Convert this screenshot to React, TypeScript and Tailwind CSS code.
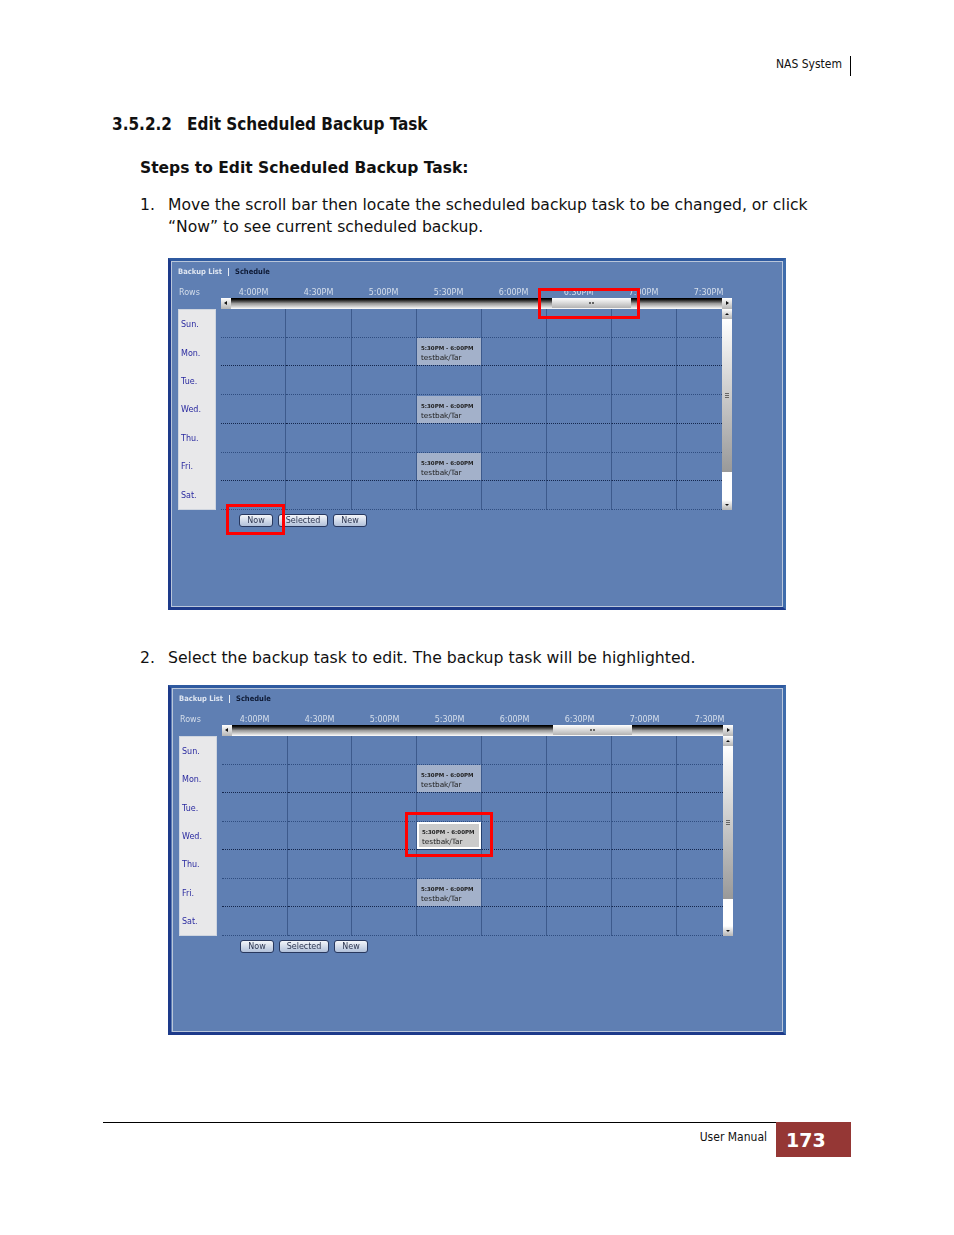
const times = ["4:00PM", "4:30PM", "5:00PM", "5:30PM", "6:00PM", "6:30PM", "7:00PM", "7:30PM"];
const days = ["Sun.", "Mon.", "Tue.", "Wed.", "Thu.", "Fri.", "Sat."];

const Arrow = ({ points }: { points: string }) => (
  <svg width="10" height="10" viewBox="0 0 10 10" className="block">
    <polygon points={points} fill="#111" />
  </svg>
);

const TaskBlock = ({ selected }: { selected: boolean }) => (
  <div
    className={
      selected
        ? "h-[27px] w-full border-2 border-white bg-[#cbcbcb] pl-[3px] text-[#222] leading-[10px] pt-[3px] shadow-[1px_1px_0_#24406f]"
        : "h-[27px] w-full bg-[#a3b1ca] pl-[4px] text-[#222] leading-[10px] pt-[5px]"
    }
  >
    <div className="text-[5.5px] font-bold whitespace-nowrap">5:30PM - 6:00PM</div>
    <div className="text-[7.3px] whitespace-nowrap">testbak/Tar</div>
  </div>
);

const ScheduleGrid = ({
  columns,
  selectedRow,
  rowsClass,
}: {
  columns: string;
  selectedRow: number;
  rowsClass: string;
}) => (
  <div className={`grid ${columns} ${rowsClass} w-[501px]`}>
    {days.map((day, row) =>
      times.map((time, col) => {
        let cls = "flex items-end min-h-0 border-b border-dotted ";
        cls += row % 2 === 0 ? "border-b-[#2f4d80] " : "border-b-[#14264d] ";
        if (col < 7) cls += "border-r [border-right-style:solid] border-r-[#3d5a8c]";
        const hasTask = col === 3 && row % 2 === 1;
        return (
          <div key={day + time} className={cls}>
            {hasTask && <TaskBlock selected={row === selectedRow} />}
          </div>
        );
      })
    )}
  </div>
);

const ScheduleShot = ({
  outerClass,
  innerClass,
  columns,
  rowsClass,
  dayClass,
  selectedRow,
  children,
}: {
  outerClass: string;
  innerClass: string;
  columns: string;
  rowsClass: string;
  dayClass: string;
  selectedRow: number;
  children: React.ReactNode;
}) => (
  <div className={`relative ml-[168px] w-[618px] border-[3px] border-[#1d3a8a] border-t-[#2f5aa0] border-r-[#3f6cab] bg-[#5f7fb3] font-['DejaVu_Sans',sans-serif] ${outerClass}`}>
    <div className={`h-full border border-[#b9c6da] blur-[0.3px] ${innerClass}`}>
      <div className="flex h-[20px] items-center pl-[6px] font-['DejaVu_Sans_Condensed','DejaVu_Sans',sans-serif] text-[7.5px] font-bold">
        <span className="text-[#dfe6f1]">Backup List</span>
        <span className="mx-[6px] h-[8px] w-px bg-[#e5ebf4]" />
        <span className="text-[#0e1a35]">Schedule</span>
      </div>
      <div className="mt-[3px] flex gap-[5px] pl-[6px]">
        <div className="w-[38px]">
          <div className="h-[24px] pl-[1px] text-[8px] leading-[15px] text-[#d5deeb]">Rows</div>
          <div className={`grid border border-[#cfd5df] bg-[#e8e8ea] pl-[2px] text-[8px] text-[#2a2aa0] ${dayClass}`}>
            {days.map((day) => (
              <div key={day} className="flex items-center pt-[2px]">
                {day}
              </div>
            ))}
          </div>
        </div>
        <div className="w-[511px]">
          <div className="flex h-[13px] text-[8px] leading-[15px] text-[#d5deeb]">
            {times.map((time) => (
              <div key={time} className="w-[65px] shrink-0 text-center">
                {time}
              </div>
            ))}
          </div>
          <div className="flex h-[11px] bg-linear-to-b from-black via-[#9a9a9a] to-white">
            <div className="w-[10px] bg-linear-to-b from-white to-[#b5b5b5]">
              <Arrow points="6,3 3,5 6,7" />
            </div>
            <div className="ml-[321px] flex h-[10px] w-[79px] items-center justify-center gap-[1px] bg-linear-to-b from-white to-[#b3b3b3]">
              <span className="h-[2px] w-[2px] bg-[#666]" />
              <span className="h-[2px] w-[2px] bg-[#666]" />
            </div>
            <div className="ml-auto w-[10px] bg-linear-to-b from-white to-[#b5b5b5]">
              <Arrow points="4,3 7,5 4,7" />
            </div>
          </div>
          <div className="flex">
            <ScheduleGrid columns={columns} selectedRow={selectedRow} rowsClass={rowsClass} />
            <div className="flex w-[10px] flex-col">
              <div className="h-[10px] bg-linear-to-b from-white to-[#b5b5b5]">
                <Arrow points="5,4 3,6 7,6" />
              </div>
              <div className="flex h-[153px] flex-col items-center justify-center gap-[1px] bg-linear-to-b from-white to-[#999]">
                <span className="h-px w-[4px] bg-[#666]" />
                <span className="h-px w-[4px] bg-[#666]" />
                <span className="h-px w-[4px] bg-[#666]" />
              </div>
              <div className="flex-1 bg-white" />
              <div className="h-[10px] bg-linear-to-b from-white to-[#b5b5b5]">
                <Arrow points="3,4 7,4 5,6" />
              </div>
            </div>
          </div>
        </div>
      </div>
      <div className="mt-[4px] ml-[67px] flex gap-[5px] text-[8px] text-[#2c3550]">
        <button className="h-[13px] w-[34px] rounded-[3px] border border-[#28385e] bg-linear-to-b from-[#f4f6fa] to-[#b2c1da] leading-[11px]">Now</button>
        <button className="h-[13px] w-[50px] rounded-[3px] border border-[#28385e] bg-linear-to-b from-[#f4f6fa] to-[#b2c1da] leading-[11px]">Selected</button>
        <button className="h-[13px] w-[34px] rounded-[3px] border border-[#28385e] bg-linear-to-b from-[#f4f6fa] to-[#b2c1da] leading-[11px]">New</button>
      </div>
    </div>
    {children}
  </div>
);

const App = () => {
  return (
    <div className="h-[1235px] w-[954px] overflow-hidden bg-white font-['DejaVu_Sans',sans-serif] text-[#111]">
      <div className="flex justify-end pt-[56px] pr-[103px]">
        <div className="h-[20px] border-r border-black pr-[8px] font-['DejaVu_Sans_Condensed','DejaVu_Sans',sans-serif] text-[12px] leading-[16px]">
          NAS System
        </div>
      </div>
      <h2 className="mt-[38px] ml-[112px] font-['DejaVu_Sans_Condensed','DejaVu_Sans',sans-serif] text-[17px] leading-[20px] font-bold">
        3.5.2.2<span className="ml-[15px]">Edit Scheduled Backup Task</span>
      </h2>
      <h3 className="mt-[24px] ml-[140px] text-[15.5px] leading-[20px] font-bold">Steps to Edit Scheduled Backup Task:</h3>
      <div className="mt-[16px] ml-[140px] flex text-[15.6px] leading-[22px]">
        <span className="w-[28px]">1.</span>
        <p className="w-[650px]">
          Move the scroll bar then locate the scheduled backup task to be changed, or click “Now” to see current scheduled backup.
        </p>
      </div>
      <div className="mt-[20px]">
        <ScheduleShot
          outerClass="h-[352px]"
          innerClass=""
          columns="grid-cols-[65px_66px_65px_65px_65px_65px_65px_45px]"
          rowsClass="h-[201px] grid-rows-[repeat(7,1fr)]"
          dayClass="h-[201px] grid-rows-[repeat(7,1fr)]"
          selectedRow={-1}
        >
          <div className="absolute top-[27px] left-[367px] h-[31px] w-[102px] border-[3px] border-[#ff0000]" />
          <div className="absolute top-[243px] left-[55px] h-[31px] w-[59px] border-[3px] border-[#ff0000]" />
        </ScheduleShot>
      </div>
      <div className="mt-[37px] ml-[140px] flex text-[15.7px] leading-[22px]">
        <span className="w-[28px]">2.</span>
        <p>Select the backup task to edit. The backup task will be highlighted.</p>
      </div>
      <div className="mt-[16px]">
        <ScheduleShot
          outerClass="h-[350px]"
          innerClass="ml-px"
          columns="grid-cols-[66px_64px_65px_65px_65px_65px_65px_46px]"
          rowsClass="h-[200px] grid-rows-[repeat(7,1fr)]"
          dayClass="h-[200px] grid-rows-[repeat(7,1fr)]"
          selectedRow={3}
        >
          <div className="absolute top-[124px] left-[234px] h-[45px] w-[88px] border-[3px] border-[#ff0000]" />
        </ScheduleShot>
      </div>
      <div className="mt-[87px] ml-[103px] flex h-[35px] w-[748px] items-start border-t border-black">
        <div className="flex-1 pt-[6px] pr-[9px] text-right font-['DejaVu_Sans_Condensed','DejaVu_Sans',sans-serif] text-[12px] leading-[16px]">
          User Manual
        </div>
        <div className="-mt-px h-[35px] w-[75px] bg-[#953735] pt-[6px] pl-[10px] text-[19px] leading-[24px] font-bold text-white">
          173
        </div>
      </div>
    </div>
  );
};

export default App;
